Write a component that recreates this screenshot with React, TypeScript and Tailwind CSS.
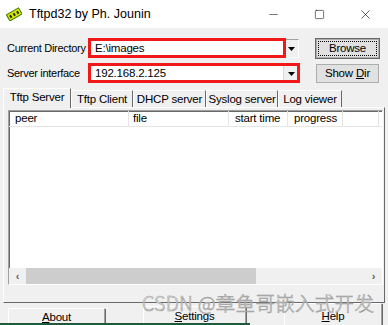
import { Minus, Square, X } from 'lucide-react'

const ui = "font-['Liberation_Sans',Arial,sans-serif]"

const raised =
  'border border-t-white border-l-white border-r-[#a0a0a0] border-b-[#a0a0a0] shadow-[1px_1px_0_#696969]'
const sunken =
  'border border-t-[#a0a0a0] border-l-[#a0a0a0] border-r-white border-b-white shadow-[inset_1px_1px_0_#696969]'

function AppIcon() {
  return (
    <svg width="16" height="14" viewBox="0 0 16 14">
      <g transform="rotate(-30 8 7)">
        <rect x="1" y="4" width="14" height="7" fill="#d8e800" stroke="#3a7a00" strokeWidth="1" />
        <rect x="3" y="6" width="2" height="3" fill="#222" />
        <rect x="7" y="6" width="2" height="3" fill="#222" />
        <rect x="11" y="6" width="2" height="3" fill="#222" />
      </g>
    </svg>
  )
}

function Arrow() {
  return (
    <div className="w-[15px] h-full bg-[#f0f0f0] border-l border-[#dadada] flex items-center justify-center">
      <svg width="7" height="4" viewBox="0 0 7 4">
        <path d="M0 0h7L3.5 4z" fill="#000" />
      </svg>
    </div>
  )
}

function Combo({ value, redWide }: { value: string; redWide: boolean }) {
  return (
    <div className="relative w-[210px] h-[19px]">
      <div className={`w-full h-full bg-white flex ${sunken}`}>
        <div className="flex-1 pl-[5px] text-[11.5px] leading-[17px] text-black whitespace-nowrap">{value}</div>
        <Arrow />
      </div>
      <div
        className={`absolute -top-[1px] -left-[1px] h-[20px] border-[3px] border-[#f01818] ${
          redWide ? 'w-[212px]' : 'w-[198px]'
        }`}
      />
    </div>
  )
}

function Button({ children, focus }: { children: React.ReactNode; focus?: boolean }) {
  return (
    <div
      className={`w-[63px] h-[19px] bg-[#e1e1e1] border border-[#adadad] flex items-center justify-center text-[11.5px] text-black whitespace-nowrap ${
        focus ? 'outline outline-1 outline-[#696969]' : ''
      }`}
    >
      <span className={focus ? 'border border-dotted border-black leading-[13px] w-[59px] text-center' : ''}>
        {children}
      </span>
    </div>
  )
}

const tabs = [
  { label: 'Tftp Server', w: 'w-[68px]' },
  { label: 'Tftp Client', w: 'w-[62px]' },
  { label: 'DHCP server', w: 'w-[73px]' },
  { label: 'Syslog server', w: 'w-[72px]' },
  { label: 'Log viewer', w: 'w-[64px]' },
]
const cols = [
  { label: 'peer', w: 'w-[120px]', pad: 'pl-[6px]' },
  { label: 'file', w: 'w-[100px]', pad: 'pl-[4px]' },
  { label: 'start time', w: 'w-[59px]', pad: 'pl-[6px]' },
  { label: 'progress', w: 'w-[55px]', pad: 'pl-[6px]' },
]

export default function App() {
  return (
    <div className={`relative w-[388px] h-[325px] overflow-hidden bg-[#f0f0f0] tracking-[-0.2px] ${ui}`}>
      {/* Title bar */}
      <div className="h-[28px] bg-white flex items-center pl-[6px]">
        <AppIcon />
        <span className="ml-[7px] text-[12.5px] tracking-normal text-black whitespace-nowrap">Tftpd32 by Ph. Jounin</span>
        <div className="ml-auto flex items-center h-full">
          <div className="w-[46px] h-full flex items-center justify-center">
            <Minus size={13} strokeWidth={1} color="#000" />
          </div>
          <div className="w-[46px] h-full flex items-center justify-center">
            <Square size={11} strokeWidth={1.2} color="#000" />
          </div>
          <div className="w-[46px] h-full flex items-center justify-center">
            <X size={15} strokeWidth={1} color="#000" />
          </div>
        </div>
      </div>

      {/* Form rows */}
      <div className="pt-[11px] flex flex-col gap-[6px]">
        <div className="flex items-center h-[19px]">
          <span className="w-[89px] pl-[7px] text-[11px] tracking-[-0.3px] text-black whitespace-nowrap">Current Directory</span>
          <Combo value="E:\images" redWide={false} />
          <div className="ml-[17px]">
            <Button focus>Browse</Button>
          </div>
        </div>
        <div className="flex items-center h-[19px]">
          <span className="w-[89px] pl-[7px] text-[11px] tracking-[-0.3px] text-black whitespace-nowrap">Server interface</span>
          <Combo value="192.168.2.125" redWide />
          <div className="ml-[17px]">
            <Button>
              Show <span className="underline">D</span>ir
            </Button>
          </div>
        </div>
      </div>

      {/* Tabs */}
      <div className="mt-[5px] ml-[3px] w-[382px]">
        <div className="flex items-end h-[19px]">
          {tabs.map((t, i) => (
            <div
              key={t.label}
              className={`${t.w} text-center whitespace-nowrap text-[11.5px] text-black border-t border-l border-r border-t-white border-l-white border-r-[#696969] ${
                i === 0 ? 'h-[20px] leading-[17px] bg-[#f0f0f0] relative z-10 mb-[-1px]' : 'h-[17px] leading-[16px]'
              }`}
            >
              {t.label}
            </div>
          ))}
        </div>
        <div className="h-[196px] border border-t-white border-l-white border-r-[#696969] border-b-[#696969] pt-[2px] pl-[4px] pr-[1px]">
          <div className={`w-[375px] h-[175px] bg-white flex flex-col ${sunken}`}>
            <div className="flex h-[16px] border-b border-[#e5e5e5]">
              {cols.map((c) => (
                <div
                  key={c.label}
                  className={`${c.w} ${c.pad} h-full border-r border-[#e5e5e5] text-[11.5px] leading-[15px] text-black whitespace-nowrap`}
                >
                  {c.label}
                </div>
              ))}
              <div className="w-[36px] h-full border-r border-[#e5e5e5]" />
            </div>
            <div className="flex-1" />
            <div className="h-[16px] bg-[#f0f0f0] flex items-center">
              <div className="w-[17px] h-full flex items-center justify-center text-[11px] font-bold text-[#606060]">‹</div>
              <div className="w-[230px] h-full bg-[#cdcdcd]" />
              <div className="flex-1" />
              <div className="w-[17px] h-full flex items-center justify-center text-[11px] font-bold text-[#606060]">›</div>
            </div>
          </div>
        </div>
      </div>

      {/* Bottom buttons */}
      <div className="flex items-start">
        <div className={`mt-[5px] ml-[8px] w-[97px] h-[22px] bg-[#f0f0f0] ${raised} text-[11.5px] text-center leading-[17px]`}>
          <span className="underline">A</span>bout
        </div>
        <div className={`mt-[3px] ml-[38px] w-[103px] h-[22px] bg-[#f0f0f0] ${raised} text-[11.5px] text-center leading-[19px]`}>
          <span className="underline">S</span>ettings
        </div>
        <div className={`ml-[38px] w-[98px] h-[24px] bg-[#f0f0f0] ${raised} text-[11.5px] text-center leading-[24px]`}>
          <span className="underline">H</span>elp
        </div>
      </div>
      <div className="absolute left-0 bottom-0 w-[250px] h-[2px] bg-[#1f5a3c]" />

      {/* Watermark */}
      <div className="absolute left-[142px] top-[290px] text-[19.5px] leading-[26px] tracking-[0.3px] whitespace-nowrap text-[#f4f4f4] [-webkit-text-stroke:0.6px_#9a9a9a] font-['Noto_Sans_CJK_SC',sans-serif] font-light">
        CSDN @章鱼哥嵌入式开发
      </div>
    </div>
  )
}
